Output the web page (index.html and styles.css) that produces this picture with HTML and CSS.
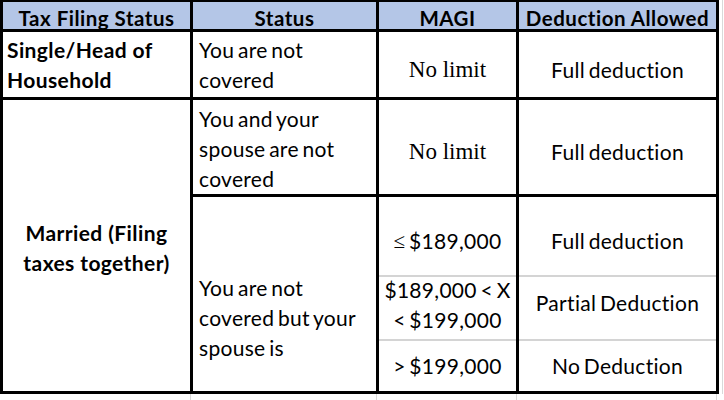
FILE: index.html
```html
<!DOCTYPE html>
<html lang="en">
<head>
<meta charset="utf-8">
<title>IRA Deduction Table</title>
<link rel="stylesheet" href="styles.css">
</head>
<body>
<div class="page">
  <div class="table">
    <div class="cell head">Tax Filing Status</div>
    <div class="cell head">Status</div>
    <div class="cell head">MAGI</div>
    <div class="cell head">Deduction Allowed</div>

    <div class="cell bold left1">Single/Head of<br>Household</div>
    <div class="cell left2">You are not<br>covered</div>
    <div class="cell center serif low">No limit</div>
    <div class="cell center low">Full deduction</div>

    <div class="cell bold center married">Married (Filing<br>taxes together)</div>
    <div class="cell left2 bottom">You and your<br>spouse are not<br>covered</div>
    <div class="cell center serif low">No limit</div>
    <div class="cell center low">Full deduction</div>

    <div class="cell left2 bottom spouse">You are not<br>covered but your<br>spouse is</div>
    <div class="sub">
      <div class="cell center s1"><span class="math">≤</span>&nbsp;$189,000</div>
      <div class="cell center s1">Full deduction</div>
      <div class="cell center s2 up7">$189,000 &lt; X<br>&lt; $199,000</div>
      <div class="cell center s2 up10">Partial Deduction</div>
      <div class="cell center s3">&gt; $199,000</div>
      <div class="cell center s3">No Deduction</div>
    </div>
  </div>
  <div class="edge"></div>
  <div class="strip">
    <div class="gl"></div>
    <div class="gl"></div>
    <div class="gl"></div>
    <div class="gl"></div>
  </div>
</div>
</body>
</html>
```

FILE: styles.css
```css
html, body {
  margin: 0;
  padding: 0;
  background: #ffffff;
}

body {
  font-family: Lato, "Liberation Sans", sans-serif;
  color: #000000;
}

.page {
  display: grid;
  grid-template-columns: 719px 4px;
  grid-template-rows: 394px 6px;
}

.table {
  display: grid;
  grid-template-columns: 187px 183px 137px 197px;
  grid-template-rows: 27px 65px 94px 194px;
  gap: 3px;
  padding: 2px 3px 3px 3px;
  background: #000000;
}

.cell {
  background: #ffffff;
  display: flex;
  align-items: center;
  font-size: 21px;
  line-height: 30px;
  letter-spacing: 0.3px;
  word-spacing: -2px;
  white-space: nowrap;
}

.head {
  background: #b4c6e7;
  justify-content: center;
  align-items: flex-start;
  padding-top: 4px;
  font-size: 20.5px;
  line-height: 24px;
  font-weight: 700;
  letter-spacing: 0.5px;
  word-spacing: 0;
}

.bold {
  font-weight: 700;
  letter-spacing: 0.4px;
  word-spacing: 0;
}

.left1 {
  padding-left: 4px;
}

.left2 {
  padding-left: 6px;
}

.center {
  justify-content: center;
  text-align: center;
}

.serif {
  font-family: "Liberation Serif", serif;
  font-size: 23px;
  letter-spacing: 0;
  word-spacing: 0;
}

.math {
  font-family: "Liberation Serif", serif;
}

.low {
  padding-top: 10px;
}

.bottom {
  align-items: flex-end;
}

.married {
  grid-column: 1;
  grid-row: 3 / span 2;
  padding-top: 4px;
}

.spouse {
  grid-column: 2;
  grid-row: 4;
  padding-bottom: 28px;
}

.sub {
  grid-column: 3 / span 2;
  grid-row: 4;
  display: grid;
  grid-template-columns: 137px 197px;
  grid-template-rows: 78px 64px 52px;
  column-gap: 3px;
  background: #000000;
}

.s1 {
  padding-top: 10px;
}

.s2,
.s3 {
  border-top: 2px solid #d4d4d4;
}

.up7 {
  padding-bottom: 7px;
}

.up10 {
  padding-bottom: 10px;
}

.edge {
  border-right: 1px solid #d9d9d9;
}

.strip {
  display: grid;
  grid-template-columns: 191px 186px 140px 200px;
}

.gl {
  border-right: 1px solid #d9d9d9;
}
```
